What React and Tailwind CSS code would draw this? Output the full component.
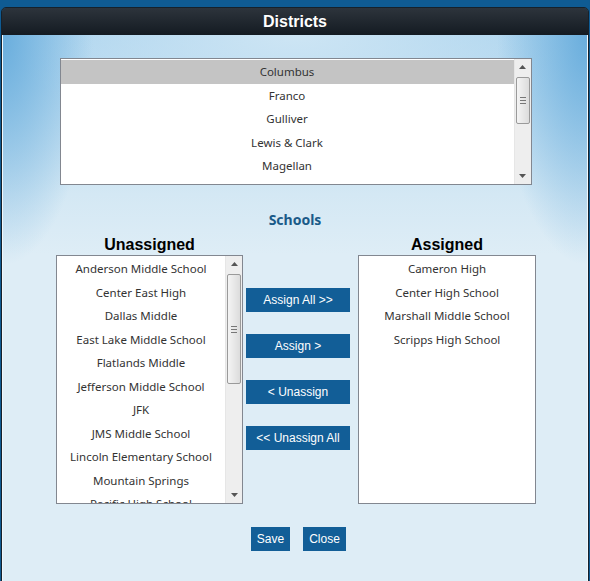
import React from "react";

const districts = ["Columbus", "Franco", "Gulliver", "Lewis & Clark", "Magellan"];
const unassigned = [
  "Anderson Middle School",
  "Center East High",
  "Dallas Middle",
  "East Lake Middle School",
  "Flatlands Middle",
  "Jefferson Middle School",
  "JFK",
  "JMS Middle School",
  "Lincoln Elementary School",
  "Mountain Springs",
  "Pacific High School",
];
const assigned = ["Cameron High", "Center High School", "Marshall Middle School", "Scripps High School"];

function Arrow({ up }) {
  return (
    <svg width="7" height="4" viewBox="0 0 7 4">
      {up ? <path d="M0 4 L3.5 0 L7 4 Z" fill="#555" /> : <path d="M0 0 L3.5 4 L7 0 Z" fill="#555" />}
    </svg>
  );
}

function Scrollbar({ thumbTop, thumbHeight }) {
  return (
    <div className="relative w-[17px] h-full bg-[#eeeeee] border-l border-[#e6e6e6] flex flex-col items-center justify-between py-[6px]">
      <Arrow up />
      <Arrow />
      <div
        className="absolute left-[1px] w-[14px] rounded-[2px] border border-[#9a9a9a] bg-[linear-gradient(to_right,#f4f4f4,#dcdcdc)] flex flex-col items-center justify-center gap-[2px]"
        style={{ top: thumbTop, height: thumbHeight }}
      >
        <div className="w-[6px] h-px bg-[#777]" />
        <div className="w-[6px] h-px bg-[#777]" />
        <div className="w-[6px] h-px bg-[#777]" />
      </div>
    </div>
  );
}

function BlueBtn({ children, w = "w-[104px]" }) {
  return (
    <div className={`${w} h-[24px] bg-[#125e97] text-white text-[12px] flex items-center justify-center font-['Liberation_Sans',Arial,sans-serif]`}>
      {children}
    </div>
  );
}

export default function App() {
  const listFont = "font-['Noto_Sans',sans-serif] text-[11.5px] text-[#333]";
  return (
    <div className="w-[590px] h-[581px] overflow-hidden bg-[#0f5b93] pt-[7px] px-[1px]">
      <div className="h-[580px] flex flex-col border border-[#16212b] rounded-t-[5px] overflow-hidden">
        <div className="h-[27px] shrink-0 bg-[linear-gradient(to_bottom,#2d343c,#141b22)] flex items-center justify-center text-white font-bold text-[16px] font-['Liberation_Sans',Arial,sans-serif]">
          Districts
        </div>
        <div className="flex-1 flex flex-col items-center border-l border-r border-[#f2f8fc] bg-[radial-gradient(ellipse_90px_230px_at_0%_0%,#6aaedd,transparent),radial-gradient(ellipse_90px_230px_at_100%_0%,#6aaedd,transparent),radial-gradient(ellipse_50%_110px_at_50%_0%,#cde5f4,transparent),linear-gradient(to_bottom,#acd4ee,#d4e8f4_160px,#deedf6_220px)]">
          <div className="mt-[23px] ml-[1px] w-[472px] h-[127px] border border-[#828790] bg-white flex">
            <div className={`flex-1 pt-[1px] ${listFont}`}>
              {districts.map((d, i) => (
                <div key={d} className={`h-[23.5px] flex items-center justify-center ${i === 0 ? "bg-[#c4c4c4]" : ""}`}>
                  {d}
                </div>
              ))}
            </div>
            <Scrollbar thumbTop={18} thumbHeight={47} />
          </div>

          <div className="mt-[24px] h-[20px] flex items-center text-[14px] font-bold text-[#1a5a88] font-['Noto_Sans',sans-serif]">
            Schools
          </div>

          <div className="mt-[6px] ml-[2px] flex items-start">
            <div className="flex flex-col items-center">
              <div className="h-[20px] flex items-center text-[16px] font-bold text-black font-['Liberation_Sans',Arial,sans-serif]">
                Unassigned
              </div>
              <div className="w-[187px] h-[249px] border border-[#828790] bg-white flex overflow-hidden">
                <div className={`flex-1 overflow-hidden pt-[1px] ${listFont}`}>
                  {unassigned.map((d) => (
                    <div key={d} className="h-[23.5px] shrink-0 flex items-center justify-center whitespace-nowrap">
                      {d}
                    </div>
                  ))}
                </div>
                <Scrollbar thumbTop={18} thumbHeight={110} />
              </div>
            </div>

            <div className="ml-[3px] mr-[8px] pt-[53px] flex flex-col gap-[22px]">
              <BlueBtn>Assign All &gt;&gt;</BlueBtn>
              <BlueBtn>Assign &gt;</BlueBtn>
              <BlueBtn>&lt; Unassign</BlueBtn>
              <BlueBtn>&lt;&lt; Unassign All</BlueBtn>
            </div>

            <div className="flex flex-col items-center">
              <div className="h-[20px] flex items-center text-[16px] font-bold text-black font-['Liberation_Sans',Arial,sans-serif]">
                Assigned
              </div>
              <div className={`w-[178px] h-[249px] border border-[#828790] bg-white pt-[1px] ${listFont}`}>
                {assigned.map((d) => (
                  <div key={d} className="h-[23.5px] flex items-center justify-center whitespace-nowrap">
                    {d}
                  </div>
                ))}
              </div>
            </div>
          </div>

          <div className="mt-[23px] ml-[7px] flex gap-[13px]">
            <BlueBtn w="w-[39px]">Save</BlueBtn>
            <BlueBtn w="w-[43px]">Close</BlueBtn>
          </div>
        </div>
      </div>
    </div>
  );
}
